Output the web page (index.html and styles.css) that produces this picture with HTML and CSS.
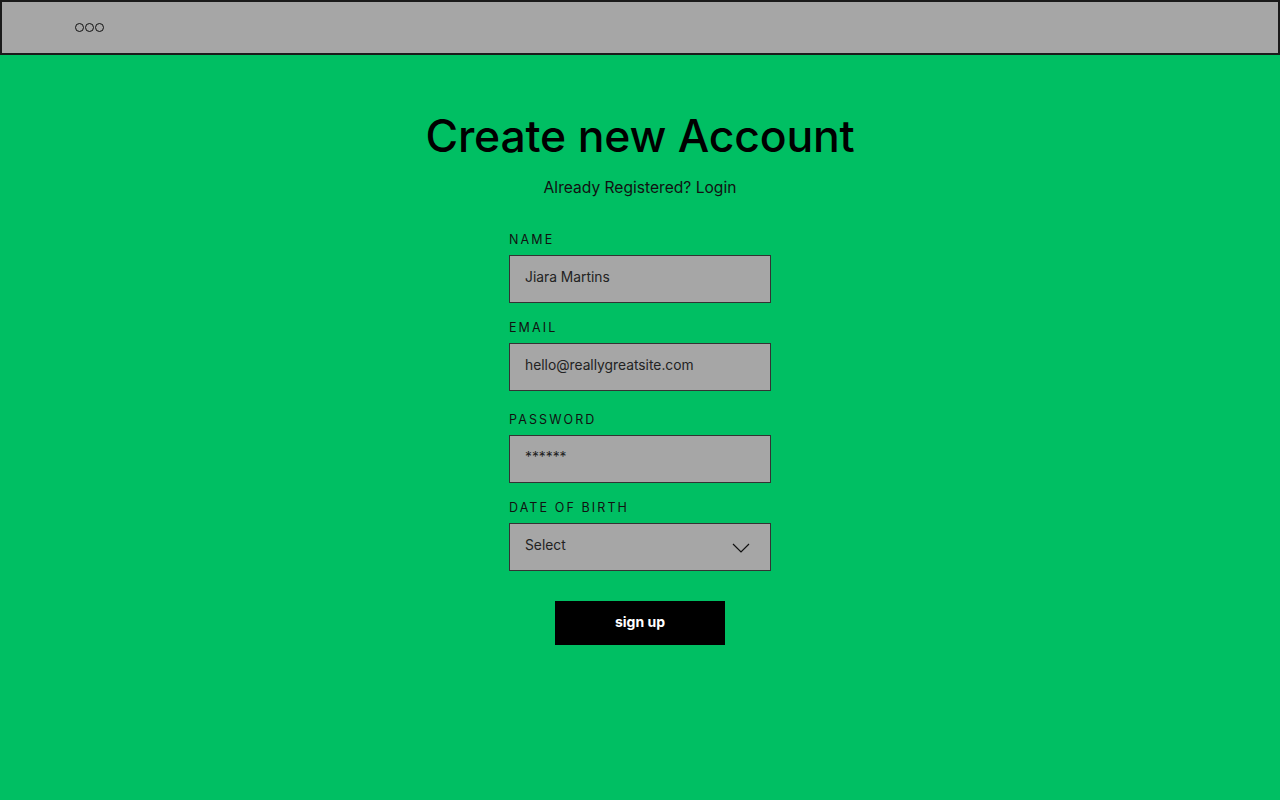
FILE: index.html
```html
<!DOCTYPE html>
<html lang="en">
<head>
<meta charset="utf-8">
<title>Create new Account</title>
<link rel="stylesheet" href="styles.css">
</head>
<body>
<header class="topbar">
  <div class="dots"><span></span><span></span><span></span></div>
</header>
<main class="page">
  <h1 class="title">Create new Account</h1>
  <p class="subtitle">Already Registered? Login</p>
  <form class="form">
    <div class="field">
      <label class="label">NAME</label>
      <div class="input">Jiara Martins</div>
    </div>
    <div class="field">
      <label class="label">EMAIL</label>
      <div class="input">hello@reallygreatsite.com</div>
    </div>
    <div class="field field-loose">
      <label class="label">PASSWORD</label>
      <div class="input">******</div>
    </div>
    <div class="field">
      <label class="label">DATE OF BIRTH</label>
      <div class="input select">Select
        <svg class="chev" width="18" height="10" viewBox="0 0 18 10"><polyline points="1,1 9,9 17,1" fill="none" stroke="#111" stroke-width="1.2"/></svg>
      </div>
    </div>
    <button type="button" class="btn">sign up</button>
  </form>
</main>
</body>
</html>
```

FILE: styles.css
```css
* { box-sizing: border-box; }
html, body { margin: 0; padding: 0; }
body {
  background: #00bf63;
  font-family: "Inter", "Open Sans", sans-serif;
  color: #000;
  height: 800px;
  overflow: hidden;
}
.topbar {
  height: 55px;
  background: #a6a6a6;
  border: 2px solid #1a1a1a;
  display: flex;
  align-items: center;
  padding-left: 73px;
}
.dots { display: flex; gap: 1px; }
.dots span {
  width: 9px; height: 9px;
  border: 1.8px solid #111;
  border-radius: 50%;
}
.page {
  display: flex;
  flex-direction: column;
  align-items: center;
  padding-top: 53px;
}
.title {
  margin: 0;
  font-family: "Inter", sans-serif;
  font-weight: 500;
  font-size: 44.5px;
  line-height: 56px;
  letter-spacing: -0.2px;
}
.subtitle {
  margin: 13px 0 0;
  font-family: "Inter", sans-serif;
  font-size: 15.6px;
  line-height: 22px;
  color: #111;
}
.form {
  margin-top: 33px;
  width: 262px;
  display: flex;
  flex-direction: column;
}
.field { display: flex; flex-direction: column; gap: 7px; margin-bottom: 17px; }
.field-loose { margin-top: 4px; }
.label {
  font-family: "Inter", sans-serif;
  font-size: 12.5px;
  line-height: 16px;
  letter-spacing: 2.1px;
  color: #111;
}
.input {
  height: 48px;
  background: #a6a6a6;
  border: 1px solid #333;
  padding: 0 15px;
  display: flex;
  align-items: center;
  font-family: "Inter", sans-serif;
  font-size: 13.8px;
  color: #222;
  padding-bottom: 4px;
}
.select { justify-content: space-between; padding-right: 20px; }
.chev { margin-top: 6px; }
.btn {
  align-self: center;
  margin-top: 13px;
  width: 170px;
  height: 44px;
  background: #000;
  color: #fff;
  border: none;
  font-family: "Inter", sans-serif;
  font-weight: 700;
  font-size: 14px;
  padding-bottom: 4px;
}
```
